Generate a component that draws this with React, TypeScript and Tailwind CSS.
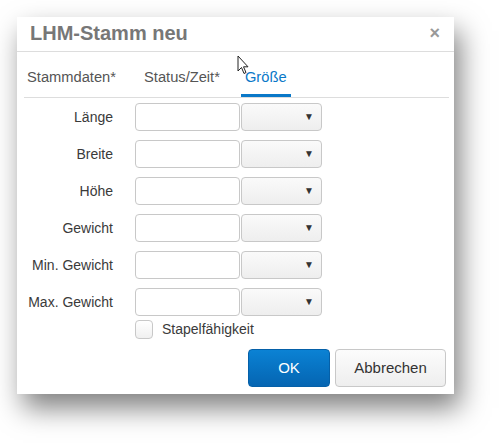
import React from "react";

const labels = ["Länge", "Breite", "Höhe", "Gewicht", "Min. Gewicht", "Max. Gewicht"];

function Row({ label }: { label: string }) {
  return (
    <div className="flex items-center h-[28px]">
      <div className="w-[96px] text-right text-[14px] text-[#3a3a3a]">{label}</div>
      <div className="ml-[22px] w-[105px] h-[28px] rounded-[4px] border border-[#c8c8c8] bg-white" />
      <div className="ml-px w-[81px] h-[28px] rounded-[4px] border border-[#c8c8c8] bg-gradient-to-b from-[#fafafa] to-[#eeeeee] flex items-center justify-end pr-[7px]">
        <span className="text-[10px] text-[#333] leading-none">▼</span>
      </div>
    </div>
  );
}

export default function App() {
  return (
    <div
      className="relative w-[502px] h-[443px] bg-white overflow-hidden pt-[17px] pl-[17px]"
      style={{ fontFamily: '"Liberation Sans", Arial, sans-serif' }}
    >
      <div className="w-[437px] h-[377px] bg-white shadow-[6px_14px_26px_rgba(0,0,0,0.5)] flex flex-col">
        <div className="h-[35px] border-b border-[#dddddd] flex items-start justify-between pl-[13px] pr-[14px] pt-[4px]">
          <div className="text-[20px] leading-[24px] font-bold text-[#777]">LHM-Stamm neu</div>
          <div className="text-[18px] leading-[24px] font-bold text-[#999]">×</div>
        </div>
        <div className="mx-[7px] mr-[5px] border-b border-[#dddddd] flex h-[46px] text-[14.7px]">
          <div className="px-[3px] pt-[16px] leading-[18px] text-[#555]">Stammdaten*</div>
          <div className="ml-[22px] px-[3px] pt-[16px] leading-[18px] text-[#555]">Status/Zeit*</div>
          <div className="ml-[18px] px-[4px] pt-[16px] leading-[18px] text-[#0a78c8] border-b-[3px] border-[#0a78c8] h-[45px]">Größe</div>
        </div>
        <div className="mt-[5px] flex flex-col gap-[9px]">
          {labels.map((l) => (
            <Row key={l} label={l} />
          ))}
        </div>
        <div className="mt-[4px] flex items-center ml-[118px] h-[19px]">
          <div className="w-[18px] h-[19px] rounded-[4px] border border-[#c8c8c8] bg-gradient-to-b from-white to-[#f0f0f0]" />
          <span className="ml-[9px] text-[14px] text-[#3a3a3a]">Stapelfähigkeit</span>
        </div>
        <div className="mt-[10px] flex justify-end pr-[8px] gap-[5px]">
          <button className="w-[82px] h-[38px] rounded-[4px] border border-[#0560a8] bg-gradient-to-b from-[#0b82d4] to-[#0565b2] text-white text-[15px]">
            OK
          </button>
          <button className="w-[111px] h-[38px] rounded-[4px] border border-[#c8c8c8] bg-gradient-to-b from-[#fcfcfc] to-[#eeeeee] text-[#333] text-[15px]">
            Abbrechen
          </button>
        </div>
      </div>
      <svg className="absolute left-[237px] top-[55px]" width="13" height="21" viewBox="0 0 13 21">
        <path d="M1 1 L1 16 L4.5 12.5 L7 18.5 L9 17.5 L6.5 11.8 L11 11.8 Z" fill="white" stroke="#222" strokeWidth="1" strokeLinejoin="round" />
      </svg>
    </div>
  );
}
